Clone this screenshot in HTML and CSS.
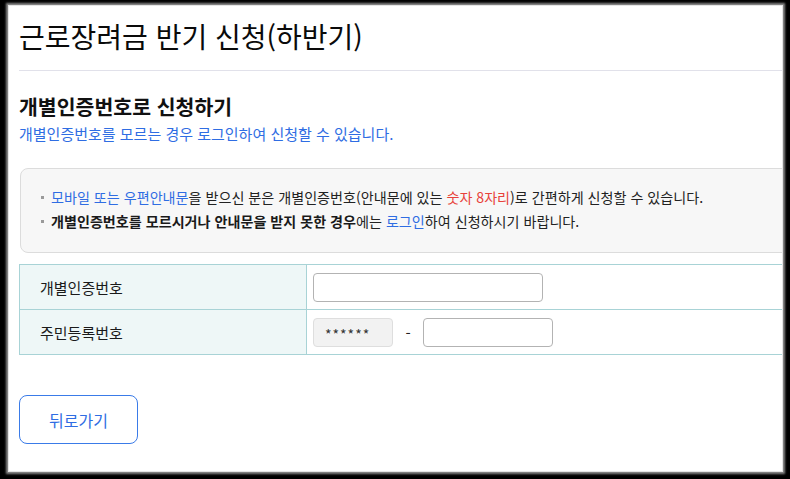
FILE: index.html
```html
<!DOCTYPE html>
<html lang="ko">
<head>
<meta charset="utf-8">
<link rel="stylesheet" href="styles.css">
</head>
<body>
<div class="panel">
  <div class="content">
    <h1 class="title">근로장려금 반기 신청(하반기)</h1>
    <hr class="sep">
    <h2 class="sub-title">개별인증번호로 신청하기</h2>
    <p class="sub-desc">개별인증번호를 모르는 경우 로그인하여 신청할 수 있습니다.</p>
    <div class="info-box">
      <ul class="info-list">
        <li><span class="blue">모바일 또는 우편안내문</span>을 받으신 분은 개별인증번호(안내문에 있는 <span class="red">숫자 8자리</span>)로 간편하게 신청할 수 있습니다.</li>
        <li><strong>개별인증번호를 모르시거나 안내문을 받지 못한 경우</strong>에는 <span class="blue">로그인</span>하여 신청하시기 바랍니다.</li>
      </ul>
    </div>
    <table class="form-table">
      <tr>
        <th>개별인증번호</th>
        <td><input class="field field-auth" type="text"></td>
      </tr>
      <tr>
        <th>주민등록번호</th>
        <td>
          <div class="ssn">
            <span class="ssn-front">******</span>
            <span class="dash">-</span>
            <input class="field field-ssn" type="password">
          </div>
        </td>
      </tr>
    </table>
    <button class="btn-back" type="button">뒤로가기</button>
  </div>
</div>
</body>
</html>
```

FILE: styles.css
```css
* { box-sizing: border-box; }
html, body { margin: 0; padding: 0; }
body {
  background: #000;
  width: 790px;
  height: 479px;
  overflow: hidden;
  font-family: "Noto Sans CJK KR", "Noto Sans", sans-serif;
  color: #222;
}
.panel {
  margin: 6px 0 0 9px;
  width: 773px;
  height: 465px;
  background: #fff;
  overflow: hidden;
  box-shadow: 0 0 0 1px #e4e4e4, 0 0 2px 3px #8a8a8a;
}
.content {
  width: 800px;
  padding: 12px 0 0 10px;
}
.title {
  margin: 0;
  font-size: 28px;
  line-height: 36px;
  font-weight: 400;
  color: #0a0a0a;
}
.sep {
  margin: 16px 0 0 0;
  border: 0;
  border-top: 1px solid #e1e1ea;
  height: 0;
}
.sub-title {
  margin: 22px 0 0 0;
  font-size: 20.5px;
  line-height: 26px;
  font-weight: 700;
  color: #111;
}
.sub-desc {
  margin: 5px 0 0 0;
  font-size: 15px;
  line-height: 20px;
  color: #2f6de3;
}
.info-box {
  margin: 24px 0 0 1px;
  border: 1px solid #dcdcdc;
  border-radius: 8px;
  background: #f7f7f7;
  padding: 16px 0 19px 20px;
}
.info-list {
  list-style: none;
  margin: 0;
  padding: 0;
  font-size: 14.1px;
  line-height: 24px;
  color: #222;
}
.info-list li {
  position: relative;
  padding-left: 10px;
}
.info-list li::before {
  content: "";
  position: absolute;
  left: 0;
  top: 11px;
  width: 3px;
  height: 3px;
  background: #9a9a9a;
}
.info-list strong { font-weight: 700; color: #1a1a1a; }
.blue { color: #2f6de3; }
.red { color: #e8423a; }
.form-table {
  margin-top: 11px;
  width: 780px;
  border-collapse: collapse;
}
.form-table th,
.form-table td {
  border: 1px solid #a8d3d6;
  height: 45px;
  padding: 0;
}
.form-table th {
  width: 287px;
  background: #eef7f7;
  text-align: left;
  font-weight: 400;
  font-size: 15px;
  color: #1a1a1a;
  padding-left: 20px;
}
.form-table td {
  padding-left: 6px;
}
.field {
  display: block;
  height: 29px;
  border: 1px solid #b3b3b3;
  border-radius: 4px;
  background: #fff;
  margin: 0;
  padding: 0 8px;
  font: inherit;
}
.field-auth { width: 230px; }
.ssn {
  display: flex;
  align-items: center;
}
.ssn-front {
  width: 80px;
  height: 29px;
  background: #f2f2f2;
  border: 1px solid #dedede;
  border-radius: 4px;
  padding-left: 11px;
  font-size: 14px;
  line-height: 30px;
  color: #333;
  letter-spacing: 1px;
}
.dash {
  width: 30px;
  text-align: center;
  font-size: 15px;
  color: #222;
}
.field-ssn { width: 130px; }
.btn-back {
  display: block;
  margin-top: 40px;
  width: 119px;
  height: 49px;
  border: 1px solid #3a7be8;
  border-radius: 8px;
  background: #fff;
  color: #2f6de3;
  font-family: inherit;
  font-size: 16px;
  padding: 0;
}
```
